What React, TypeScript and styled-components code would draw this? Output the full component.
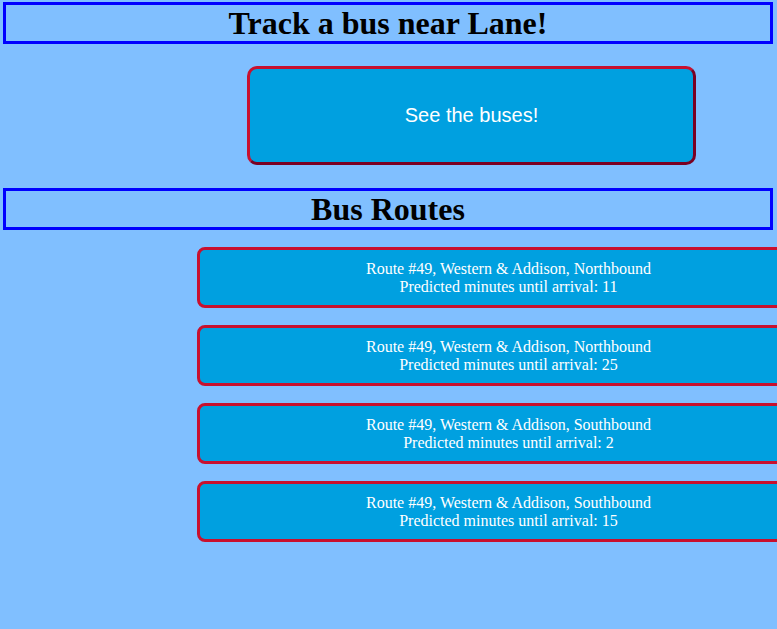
import styled, { createGlobalStyle } from "styled-components";

const GlobalStyle = createGlobalStyle`
  html {
    background: #80bfff;
  }
  body {
    margin: 0;
    background: #80bfff;
    font-family: "Liberation Serif", "Times New Roman", serif;
  }
  ::-webkit-scrollbar {
    height: 8px;
    width: 8px;
    background: #f0f0f0;
  }
  ::-webkit-scrollbar-thumb {
    background: #c4c4c4;
  }
  ::-webkit-scrollbar-track {
    background: #f0f0f0;
  }
`;

const Page = styled.div`
  display: flex;
  flex-direction: column;
  padding: 2px 0 80px;
`;

const Heading = styled.h1`
  margin: 0 4px 0 3px;
  border: 3px solid #0000ff;
  text-align: center;
  font-family: "Liberation Serif", "Times New Roman", serif;
  font-size: 32px;
  font-weight: bold;
  line-height: 36px;
  color: #000;
`;

const SeeButton = styled.button`
  align-self: flex-start;
  margin: 22px 0 23px 247px;
  width: 449px;
  height: 99px;
  background: #00a0e0;
  border-width: 3px;
  border-style: solid;
  border-color: #c8102e #7a0022 #7a0022 #c8102e;
  border-radius: 10px;
  color: #fff;
  font-family: "Liberation Sans", Arial, sans-serif;
  font-size: 20px;
  cursor: pointer;
`;

const RouteList = styled.div`
  display: flex;
  flex-direction: column;
  gap: 17px;
  margin-top: 17px;
`;

const RouteCard = styled.div`
  flex: none;
  margin-left: 197px;
  width: 623px;
  height: 61px;
  box-sizing: border-box;
  display: flex;
  flex-direction: column;
  justify-content: center;
  background: #00a0e0;
  border: 3px solid #c8102e;
  border-radius: 8px;
  color: #fff;
  text-align: center;
  font-size: 16px;
  line-height: 18px;
`;

const routes = [
  { dir: "Northbound", mins: 11 },
  { dir: "Northbound", mins: 25 },
  { dir: "Southbound", mins: 2 },
  { dir: "Southbound", mins: 15 },
];

export default function App() {
  return (
    <>
      <GlobalStyle />
      <Page>
        <Heading>Track a bus near Lane!</Heading>
        <SeeButton>See the buses!</SeeButton>
        <Heading>Bus Routes</Heading>
        <RouteList>
          {routes.map((r, i) => (
            <RouteCard key={i}>
              <div>Route #49, Western &amp; Addison, {r.dir}</div>
              <div>Predicted minutes until arrival: {r.mins}</div>
            </RouteCard>
          ))}
        </RouteList>
      </Page>
    </>
  );
}
